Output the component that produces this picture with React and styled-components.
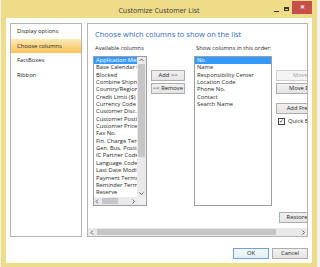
import styled, { createGlobalStyle } from "styled-components";

const GlobalStyle = createGlobalStyle`
  html, body { margin: 0; padding: 0; }
  body {
    width: 320px;
    height: 267px;
    overflow: hidden;
    background: #f1f1f1;
    font-family: "Open Sans", "Noto Sans", sans-serif;
    color: #1f1f1f;
  }
`;

const available = [
  "Application Method",
  "Base Calendar Code",
  "Blocked",
  "Combine Shipments",
  "Country/Region Code",
  "Credit Limit ($)",
  "Currency Code",
  "Customer Disc. Group",
  "Customer Posting Group",
  "Customer Price Group",
  "Fax No.",
  "Fin. Charge Terms Code",
  "Gen. Bus. Posting Group",
  "IC Partner Code",
  "Language Code",
  "Last Date Modified",
  "Payment Terms Code",
  "Reminder Terms Code",
  "Reserve",
];
const shown = [
  "No.",
  "Name",
  "Responsibility Center",
  "Location Code",
  "Phone No.",
  "Contact",
  "Search Name",
];
const navItems = ["Display options", "Choose columns", "FactBoxes", "Ribbon"];

function Chevron({ dir }) {
  const pts = {
    up: "1.5,4 3.5,2 5.5,4",
    down: "1.5,2.5 3.5,4.5 5.5,2.5",
    left: "4,1.5 2,3.5 4,5.5",
    right: "2.5,1.5 4.5,3.5 2.5,5.5",
  }[dir];
  return (
    <svg width="7" height="7" viewBox="0 0 7 7">
      <polyline points={pts} fill="none" stroke="#555" strokeWidth="0.9" />
    </svg>
  );
}

export default function App() {
  return (
    <>
      <GlobalStyle />
      <Window>
        <TitleBar>
          <span />
          <Title>Customize Customer List</Title>
          <Controls>
            <MinBtn>
              <i />
            </MinBtn>
            <MaxBtn>
              <i />
            </MaxBtn>
            <CloseBtn>✕</CloseBtn>
          </Controls>
        </TitleBar>
        <Client>
          <MainRow>
            <Nav>
              {navItems.map((n) => (
                <NavItem key={n} $active={n === "Choose columns"}>
                  {n}
                </NavItem>
              ))}
            </Nav>
            <Panel>
              <ScrollArea>
                <Inner>
                  <Heading>Choose which columns to show on the list</Heading>
                  <Columns>
                    <Column>
                      <Label>Available columns</Label>
                      <ListBox $w={54} $scroll>
                        <Items>
                          {available.map((a, i) => (
                            <Item key={a} $selected={i === 0}>
                              {a}
                            </Item>
                          ))}
                        </Items>
                        <VScroll>
                          <ArrowCell>
                            <Chevron dir="up" />
                          </ArrowCell>
                          <VThumb $size={93} />
                          <Track />
                          <ArrowCell>
                            <Chevron dir="down" />
                          </ArrowCell>
                        </VScroll>
                        <HScroll>
                          <ArrowCell>
                            <Chevron dir="left" />
                          </ArrowCell>
                          <HThumb $size={16} />
                          <Track />
                          <ArrowCell>
                            <Chevron dir="right" />
                          </ArrowCell>
                        </HScroll>
                        <Corner />
                      </ListBox>
                    </Column>
                    <ButtonColumn $ml={4} $w={34}>
                      <Btn>Add &gt;&gt;</Btn>
                      <Btn>&lt;&lt; Remove</Btn>
                    </ButtonColumn>
                    <Column $ml={9}>
                      <Label>Show columns in this order:</Label>
                      <ListBox $w={78}>
                        <Items>
                          {shown.map((s, i) => (
                            <Item key={s} $selected={i === 0}>
                              {s}
                            </Item>
                          ))}
                        </Items>
                      </ListBox>
                    </Column>
                    <ButtonColumn $ml={4} $w={58}>
                      <Btn disabled>Move Up</Btn>
                      <Btn>Move Down</Btn>
                      <Btn $mt={7}>Add FreeFlow</Btn>
                      <CheckRow>
                        <CheckBox>✓</CheckBox>
                        Quick Entry
                      </CheckRow>
                    </ButtonColumn>
                  </Columns>
                  <RestoreRow>
                    <Btn $w={36}>Restore</Btn>
                  </RestoreRow>
                </Inner>
              </ScrollArea>
              <PanelScroll>
                <ArrowCell $w={8}>
                  <Chevron dir="left" />
                </ArrowCell>
                <HThumb $size={179} />
                <Track />
                <ArrowCell $w={8}>
                  <Chevron dir="right" />
                </ArrowCell>
              </PanelScroll>
            </Panel>
          </MainRow>
          <Footer>
            <Btn $w={36} $default>
              OK
            </Btn>
            <Btn $w={36}>Cancel</Btn>
          </Footer>
        </Client>
      </Window>
    </>
  );
}

const Window = styled.div`
  margin-left: 1px;
  width: 316px;
  height: 272px;
  box-sizing: border-box;
  padding: 0 5px;
  background: #efdc88;
  display: flex;
  flex-direction: column;
`;

const TitleBar = styled.div`
  height: 18px;
  flex: none;
  display: grid;
  grid-template-columns: 1fr auto 1fr;
`;

const Title = styled.div`
  font-size: 7px;
  line-height: 18px;
  padding-top: 2px;
  color: #3a3a3a;
  white-space: nowrap;
`;

const Controls = styled.div`
  justify-self: end;
  display: flex;
  align-items: flex-start;
  padding-top: 1px;
`;

const MinBtn = styled.div`
  width: 10px;
  height: 13px;
  display: flex;
  justify-content: center;
  i {
    margin-top: 10px;
    width: 5px;
    height: 1px;
    background: #333;
  }
`;

const MaxBtn = styled.div`
  width: 10px;
  height: 13px;
  display: flex;
  justify-content: center;
  i {
    margin-top: 6px;
    width: 5px;
    height: 4px;
    box-sizing: border-box;
    border: 1px solid #333;
    border-top-width: 2px;
  }
`;

const CloseBtn = styled.div`
  width: 20px;
  height: 13px;
  margin-left: 1px;
  background: #c74f4b;
  color: #fff;
  font-size: 6px;
  font-weight: 700;
  line-height: 13px;
  text-align: center;
`;

const Client = styled.div`
  height: 245px;
  flex: none;
  background: #fff;
  box-sizing: border-box;
  padding: 5px 4px 0;
  display: flex;
  flex-direction: column;
`;

const MainRow = styled.div`
  height: 214px;
  display: flex;
  gap: 5px;
`;

const Nav = styled.div`
  width: 72px;
  flex: none;
  box-sizing: border-box;
  border: 1px solid #b4b4b4;
  background: #fff;
`;

const NavItem = styled.div`
  height: 14.6px;
  line-height: 14.6px;
  padding-left: 6px;
  font-size: 5.8px;
  color: #222;
  white-space: nowrap;
  background: ${(p) =>
    p.$active ? "linear-gradient(#fde9b5, #f8c25a)" : "transparent"};
`;

const Panel = styled.div`
  flex: 1;
  min-width: 0;
  box-sizing: border-box;
  border: 1px solid #b4b4b4;
  display: flex;
  flex-direction: column;
  overflow: hidden;
`;

const ScrollArea = styled.div`
  flex: 1;
  overflow: hidden;
`;

const Inner = styled.div`
  width: 222px;
  padding: 5px 0 0 5px;
`;

const Heading = styled.div`
  font-size: 7.5px;
  line-height: 10px;
  padding-left: 2px;
  color: #2f6db5;
  white-space: nowrap;
`;

const Columns = styled.div`
  display: flex;
  align-items: flex-start;
  margin-top: 5px;
`;

const Column = styled.div`
  flex: none;
  display: flex;
  flex-direction: column;
  margin-left: ${(p) => p.$ml || 0}px;
`;

const Label = styled.div`
  height: 8px;
  line-height: 8px;
  font-size: 5.8px;
  padding-left: 2px;
  margin-bottom: 4px;
  white-space: nowrap;
`;

const ListBox = styled.div`
  width: ${(p) => p.$w}px;
  height: 150px;
  box-sizing: border-box;
  border: 1px solid #9a9ea6;
  background: #fff;
  display: grid;
  grid-template-columns: ${(p) => (p.$scroll ? "1fr 9px" : "1fr")};
  grid-template-rows: ${(p) => (p.$scroll ? "1fr 8px" : "1fr")};
  overflow: hidden;
`;

const Items = styled.div`
  overflow: hidden;
  min-width: 0;
`;

const Item = styled.div`
  height: 7.35px;
  line-height: 7.35px;
  font-size: 5.8px;
  padding-left: 2px;
  white-space: nowrap;
  overflow: hidden;
  color: ${(p) => (p.$selected ? "#fff" : "#1f1f1f")};
  background: ${(p) => (p.$selected ? "#3399ff" : "transparent")};
`;

const VScroll = styled.div`
  background: #e9e9e9;
  display: flex;
  flex-direction: column;
`;

const HScroll = styled.div`
  background: #e9e9e9;
  display: flex;
`;

const PanelScroll = styled(HScroll)`
  height: 8px;
  flex: none;
`;

const Corner = styled.div`
  background: #f0f0f0;
`;

const ArrowCell = styled.div`
  flex: none;
  width: ${(p) => (p.$w ? `${p.$w}px` : "auto")};
  min-width: 7px;
  min-height: 7px;
  display: flex;
  align-items: center;
  justify-content: center;
`;

const VThumb = styled.div`
  flex: none;
  height: ${(p) => p.$size}px;
  margin: 0 1px;
  background: #c6c6c6;
`;

const HThumb = styled.div`
  flex: none;
  width: ${(p) => p.$size}px;
  margin: 1px 0 1px 1px;
  background: #c6c6c6;
`;

const Track = styled.div`
  flex: 1;
`;

const ButtonColumn = styled.div`
  flex: none;
  width: ${(p) => p.$w}px;
  margin-left: ${(p) => p.$ml}px;
  padding-top: 26px;
  display: flex;
  flex-direction: column;
  gap: 2px;
`;

const Btn = styled.button`
  flex: none;
  height: 11px;
  width: ${(p) => (p.$w ? `${p.$w}px` : "100%")};
  margin-top: ${(p) => p.$mt || 0}px;
  padding: 0;
  box-sizing: border-box;
  font-family: inherit;
  font-size: 5.8px;
  line-height: 9px;
  white-space: nowrap;
  overflow: hidden;
  color: ${(p) => (p.disabled ? "#a3a3a3" : "#222")};
  border: 1px solid
    ${(p) => (p.$default ? "#6fa3d8" : p.disabled ? "#cfcfcf" : "#adadad")};
  background: ${(p) =>
    p.$default
      ? "linear-gradient(#f3f8fd, #e4eef8)"
      : p.disabled
      ? "#f4f4f4"
      : "linear-gradient(#f1f1f1, #e4e4e4)"};
`;

const CheckRow = styled.div`
  display: flex;
  align-items: center;
  gap: 3px;
  margin-top: 1px;
  padding-left: 2px;
  font-size: 5.8px;
  line-height: 8px;
  white-space: nowrap;
`;

const CheckBox = styled.span`
  width: 7px;
  height: 7px;
  box-sizing: border-box;
  border: 1px solid #444;
  background: #fff;
  font-size: 6px;
  line-height: 5px;
  text-align: center;
  color: #222;
`;

const RestoreRow = styled.div`
  display: flex;
  justify-content: flex-end;
  margin-top: 6px;
`;

const Footer = styled.div`
  display: flex;
  justify-content: flex-end;
  gap: 3px;
  margin-top: 11px;
`;
